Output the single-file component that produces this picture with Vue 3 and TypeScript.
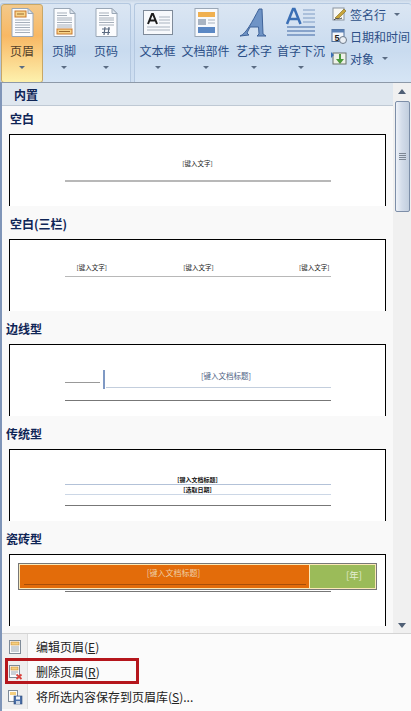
<script setup lang="ts">
interface Btn { label: string; icon: string; width: number; active?: boolean }
const groupOne: Btn[] = [
  { label: '页眉', icon: 'header', width: 42, active: true },
  { label: '页脚', icon: 'footer', width: 42 },
  { label: '页码', icon: 'number', width: 42 },
]
const groupTwo: Btn[] = [
  { label: '文本框', icon: 'textbox', width: 43 },
  { label: '文档部件', icon: 'parts', width: 53 },
  { label: '艺术字', icon: 'art', width: 44 },
  { label: '首字下沉', icon: 'drop', width: 50 },
]
</script>

<template>
  <div class="screen">
    <header class="ribbon">
      <div class="group first">
        <div v-for="b in groupOne" :key="b.label" class="rbtn" :class="{ active: b.active }" :style="{ width: b.width + 'px' }">
          <svg class="ricon" viewBox="0 0 32 32" width="32" height="32">
            <path d="M6 2.500h16l5 5v23H6z" fill="#fbfcfe" stroke="#9aa7b6" />
            <path d="M22 2.500v5h5z" fill="#dfe6ef" stroke="#9aa7b6" />
            <g stroke="#a6afba">
              <path v-if="b.icon !== 'header'" d="M9 7h10M9 9.500h10" />
              <path d="M9 14h15M9 16.500h15M9 19h15" />
              <path v-if="b.icon === 'header'" d="M9 21.500h15M9 24h15M9 26.500h15" />
              <path v-if="b.icon === 'footer'" d="M9 12h15M9 21h15" />
              <path v-if="b.icon === 'number'" d="M9 12h15" />
            </g>
            <template v-if="b.icon === 'header'">
              <rect x="9" y="5" width="11" height="6" fill="#f7d48a" stroke="#c9792a" />
              <path d="M11 8h7" stroke="#9b6a2d" />
            </template>
            <template v-if="b.icon === 'footer'">
              <rect x="9" y="23" width="15" height="5" fill="#f7d48a" stroke="#c9792a" />
              <path d="M11 25.500h11" stroke="#9b6a2d" />
            </template>
            <template v-if="b.icon === 'number'">
              <path d="M12 23h8M12 26.500h8M15 21l-1 8M19 21l-1 8" stroke="#5a6a80" stroke-width="1.200" fill="none" />
            </template>
          </svg>
          <span class="rlabel">{{ b.label }}</span>
          <i class="caret"></i>
        </div>
      </div>
      <div class="group second">
        <div v-for="b in groupTwo" :key="b.label" class="rbtn" :style="{ width: b.width + 'px' }">
          <svg class="ricon" viewBox="0 0 32 32" width="32" height="32">
            <template v-if="b.icon === 'textbox'">
              <rect x="1.500" y="4.500" width="29" height="24" fill="#f7f9fc" stroke="#7f8b9a" />
              <path d="M17 11h11M17 14h11M17 17h11M5 21h23M5 24h23" stroke="#a9b3bf" />
              <path d="M6 18l4-10h1l4 10M7.500 14.500h6" fill="none" stroke="#1c1c1c" stroke-width="2" />
            </template>
            <template v-if="b.icon === 'parts'">
              <rect x="5" y="2.500" width="23" height="28" fill="#f7f9fc" stroke="#9aa7b6" />
              <rect x="8" y="6" width="17" height="5" fill="#f0b050" />
              <rect x="8" y="13" width="8" height="6" fill="#a9b4c2" />
              <path d="M18 14h7M18 17h7" stroke="#a9b3bf" />
              <rect x="8" y="21" width="17" height="6" fill="#5b88c4" />
            </template>
            <template v-if="b.icon === 'art'">
              <path d="M2 30C8 28 14 16 21 3h3l1 25 3 2H19l2-2-.5-7H12l-3 6 2 2z" fill="#6f94c6" stroke="#3f6399" />
            </template>
            <template v-if="b.icon === 'drop'">
              <path d="M2 18L8 3h1.500l6 15M4.500 13h9" fill="none" stroke="#3a6fb5" stroke-width="2.500" />
              <path d="M18 4h12M18 8h12M18 12h12M18 16h12" stroke="#7f9cc4" />
              <path d="M2 21h28M2 25h28M2 29h28" stroke="#6f8fbd" stroke-width="1.300" />
            </template>
          </svg>
          <span class="rlabel">{{ b.label }}</span>
          <i class="caret"></i>
        </div>
        <div class="minis">
          <div class="mini">
            <svg viewBox="0 0 16 16" width="16" height="16"><rect x="2" y="2" width="11" height="12" fill="#f8f8f4" stroke="#8a94a0" /><path d="M4 12L13 3l2 2-8 8z" fill="#c8a43a" stroke="#7a6a20" stroke-width=".6" /><path d="M3 14c3-3 4 0 8-2" stroke="#444" fill="none" /></svg>
            <span>签名行</span><i class="caret inline"></i>
          </div>
          <div class="mini">
            <svg viewBox="0 0 16 16" width="16" height="16"><rect x="1" y="1.500" width="12" height="12" fill="#f4f7fb" stroke="#4f6f9a" /><rect x="1" y="1.500" width="12" height="3" fill="#5a80b5" /><text x="3.500" y="12.500" class="mini-num">5</text><circle cx="12" cy="12" r="3.500" fill="#e9eef4" stroke="#6c7a8a" /></svg>
            <span>日期和时间</span>
          </div>
          <div class="mini">
            <svg viewBox="0 0 16 16" width="16" height="16"><rect x="2" y="3" width="13" height="11" fill="#eef1e8" stroke="#69736b" /><path d="M8 4v5H5l4 5 4-5h-3V4z" fill="#4c9a3c" /><path d="M0 2l3 3-3 3z" fill="#3a6fb5" /></svg>
            <span>对象</span><i class="caret inline"></i>
          </div>
        </div>
      </div>
    </header>

    <section class="panel">
      <div class="gallery-wrap">
        <div class="gallery">
          <h2 class="band">内置</h2>

          <div class="entry first-entry">
            <h3 class="title indented">空白</h3>
            <div class="preview blank">
              <p class="tiny">[键入文字]</p>
              <div class="rule soft"></div>
            </div>
          </div>

          <div class="entry">
            <h3 class="title indented">空白(三栏)</h3>
            <div class="preview columns">
              <div class="three">
                <p class="tiny">[键入文字]</p>
                <p class="tiny">[键入文字]</p>
                <p class="tiny">[键入文字]</p>
              </div>
              <div class="rule soft thin"></div>
            </div>
          </div>

          <div class="entry">
            <h3 class="title">边线型</h3>
            <div class="preview sideline">
              <div class="side-row">
                <div class="side-left"></div>
                <div class="side-bar"></div>
                <div class="side-right"><p class="tiny big">[键入文档标题]</p></div>
              </div>
              <div class="rule dark"></div>
            </div>
          </div>

          <div class="entry">
            <h3 class="title">传统型</h3>
            <div class="preview classic">
              <p class="tiny bold">[键入文档标题]</p>
              <div class="rule blue"></div>
              <p class="tiny bold">[选取日期]</p>
              <div class="rule blue pale"></div>
              <div class="rule dark gap"></div>
            </div>
          </div>

          <div class="entry">
            <h3 class="title">瓷砖型</h3>
            <div class="preview tile">
              <div class="tile-box">
                <div class="tile-main"><span class="tile-text">[键入文档标题]</span><div class="tile-line"></div></div>
                <div class="tile-year"><span class="tile-text year">[年]</span></div>
              </div>
              <div class="rule dark tight"></div>
            </div>
          </div>
        </div>

        <aside class="scrollbar">
          <i class="arrow up"></i>
          <div class="thumb"><b></b><b></b><b></b><b></b></div>
          <div class="track"></div>
          <i class="arrow down"></i>
        </aside>
      </div>

      <nav class="menu">
        <div class="item">
          <span class="gutter">
            <svg viewBox="0 0 16 16" width="16" height="16"><rect x="2.500" y="1.500" width="11" height="13" fill="#fbfcfd" stroke="#7f8b98" /><rect x="4" y="3" width="8" height="3" fill="#f4cf80" stroke="#c9892f" stroke-width=".6" /><path d="M4 8h8M4 10h8M4 12h8" stroke="#9aa6b2" /></svg>
          </span>
          <span class="text">编辑页眉(<u>E</u>)</span>
        </div>
        <div class="item boxed">
          <span class="gutter">
            <svg viewBox="0 0 16 16" width="16" height="16"><rect x="2.500" y="1.500" width="10" height="12" fill="#fbfcfd" stroke="#7f8b98" /><rect x="4" y="3" width="7" height="3" fill="#f4cf80" stroke="#c9892f" stroke-width=".6" /><path d="M4 8h7M4 10h5" stroke="#9aa6b2" /><path d="M9.500 10.500l5 4.500M14.500 10.500l-5 4.500" stroke="#d9403a" stroke-width="1.800" /></svg>
          </span>
          <span class="text">删除页眉(<u>R</u>)</span>
        </div>
        <div class="item">
          <span class="gutter">
            <svg viewBox="0 0 16 16" width="16" height="16"><rect x="1.500" y="1.500" width="9" height="11" fill="#fbfcfd" stroke="#7f8b98" /><rect x="3" y="3" width="6" height="3" fill="#f4cf80" /><rect x="7" y="7" width="8" height="8" fill="#4a6fa8" stroke="#2f4a78" stroke-width=".6" /><rect x="9" y="7.500" width="4" height="3" fill="#eef2f7" /><rect x="9" y="12" width="4" height="3" fill="#c8d4e4" /></svg>
          </span>
          <span class="text">将所选内容保存到页眉库(<u>S</u>)...</span>
        </div>
        <div class="red-box"></div>
      </nav>
    </section>
  </div>
</template>

<style scoped>
.screen {
  width: 411px;
  height: 711px;
  display: flex;
  flex-direction: column;
  overflow: hidden;
  font-family: "Noto Sans CJK SC", "Liberation Sans", sans-serif;
  font-size: 12px;
  background: #d6e3f2;
}
.ribbon {
  height: 82px;
  flex: none;
  display: flex;
  padding-top: 3px;
  box-sizing: border-box;
  background: linear-gradient(#c9d6e6 0, #dbe6f3 4%, #c8daef 55%, #cfdff1 100%);
}
.group {
  display: flex;
  border: 1px solid #b4c8e0;
  border-bottom: 0;
  border-radius: 3px 3px 0 0;
  box-sizing: border-box;
  background: linear-gradient(#dbe6f3, #c9dbef 60%, #d6e5f5);
}
.group.first { width: 131px; margin-left: 0; }
.group.second { flex: 1; margin-left: 3px; padding-left: 1px; border-right: 0; }
.rbtn {
  flex: none;
  display: flex;
  flex-direction: column;
  align-items: center;
  padding-top: 2px;
  box-sizing: border-box;
  color: #2c4f87;
}
.rbtn.active {
  height: 79px;
  border: 1px solid #c8a766;
  border-radius: 3px;
  padding-top: 1px;
  background: linear-gradient(#f3c98a 0, #f8b864 40%, #fbd489 70%, #fdf1ad 100%);
  color: #54402a;
}
.ricon { flex: none; display: block; }
.rlabel {
  margin-top: 5px;
  line-height: 16px;
  white-space: nowrap;
}
.caret {
  display: block;
  width: 0;
  height: 0;
  margin-top: 7px;
  border: 3px solid transparent;
  border-top: 3px solid #5b6c83;
  border-bottom: 0;
}
.caret.inline { margin: 0 0 0 5px; }
.minis {
  flex: 1;
  min-width: 0;
  display: flex;
  flex-direction: column;
  margin-top: -1px;
  margin-left: 5px;
}
.mini {
  height: 22px;
  display: flex;
  align-items: center;
  gap: 3px;
  color: #2c4f87;
  white-space: nowrap;
}
.mini-num { font: 700 9px "Liberation Sans", sans-serif; fill: #222; }

.panel {
  flex: 1;
  min-height: 0;
  display: flex;
  flex-direction: column;
  border-left: 2px solid #7f95b8;
  border-top: 1px solid #8d99a8;
  background: #f9f9f9;
}
.gallery-wrap {
  flex: 1;
  min-height: 0;
  display: flex;
}
.gallery {
  flex: 1;
  min-width: 0;
  overflow: hidden;
}
.band {
  margin: 0;
  height: 22px;
  padding-left: 12px;
  font-size: 12px;
  line-height: 23px;
  font-weight: 700;
  color: #0f2556;
  background: #dfe7ef;
  border-bottom: 1px solid #bfc9d4;
}
.title {
  margin: 0;
  height: 33px;
  padding: 10px 0 0 4px;
  box-sizing: border-box;
  font-size: 12px;
  line-height: 16px;
  font-weight: 700;
  color: #0f2556;
}
.title.indented { padding-left: 8px; }
.first-entry .title { height: 28px; padding-top: 5px; }
.preview {
  margin-left: 7px;
  width: 377px;
  height: 72px;
  box-sizing: border-box;
  border: 1.500px solid #000;
  border-bottom: 0;
  background: #fff;
  display: flex;
  flex-direction: column;
  align-items: center;
  overflow: hidden;
}
.tiny {
  margin: 0;
  font-size: 6.500px;
  line-height: 7px;
  color: #222;
  white-space: nowrap;
}
.tiny.big { font-size: 7.500px; line-height: 9px; color: #4c5e82; }
.tiny.bold { font-weight: 700; color: #111; font-size: 6px; }
.rule { flex: none; width: 266px; height: 1px; }
.rule.soft { height: 1.500px; background: #b8b8b8; margin-top: 13px; }
.rule.soft.thin { margin-top: 5px; height: 1px; }
.rule.dark { background: #777; }
.rule.blue { background: #b3c2d8; margin: 1px 0; }
.rule.blue.pale { background: #ccd7e6; }
.rule.dark.gap { margin-top: 9px; }
.rule.dark.tight { margin-top: 1px; }
.blank { padding-top: 25px; }
.columns { padding-top: 24px; }
.three {
  width: 266px;
  padding: 0 1px 0 12px;
  box-sizing: border-box;
  display: flex;
  justify-content: space-between;
}
.three .tiny:nth-child(2) { margin-right: 9px; }
.sideline { padding-top: 24px; }
.side-row {
  width: 266px;
  height: 20px;
  display: flex;
  align-items: flex-end;
}
.side-left { width: 35px; height: 1px; background: #999; margin-bottom: 6px; }
.side-bar { width: 2px; height: 19px; background: #7f99c4; margin: 0 1px 0 3px; }
.side-right {
  flex: 1;
  height: 17px;
  box-sizing: border-box;
  border-bottom: 1px solid #c3cedd;
  margin-bottom: 1px;
  text-align: center;
  padding-left: 16px;
}
.sideline .rule.dark { margin-top: 11px; }
.classic { padding-top: 26px; }
.tile { padding-top: 8px; }
.tile-box {
  width: 359px;
  height: 27px;
  flex: none;
  box-sizing: border-box;
  display: flex;
  border: 1px solid #777;
  padding: 1px;
  background: #fbe9b8;
}
.tile-main {
  flex: 1;
  background: #e36c0a;
  display: flex;
  flex-direction: column;
  align-items: center;
  padding-top: 3px;
  box-sizing: border-box;
}
.tile-main .tile-text { margin-left: 18px; }
.tile-line { width: 282px; height: 1px; background: #a84e08; margin-top: 6px; }
.tile-year {
  width: 65px;
  margin-left: 1px;
  background: #9bbb59;
  text-align: right;
  padding: 5px 13px 0 0;
  box-sizing: border-box;
}
.tile-text { display: block; font-size: 8px; line-height: 10px; color: #eecfa8; white-space: nowrap; }
.tile-text.year { font-size: 9.500px; color: #e4edd2; }

.scrollbar {
  width: 18px;
  flex: none;
  display: flex;
  flex-direction: column;
  align-items: center;
  background: #f0f0f0;
}
.arrow {
  flex: none;
  width: 0;
  height: 0;
  border: 4px solid transparent;
}
.arrow.up { border-bottom: 5px solid #4f5f75; border-top: 0; margin: 6px 0 7px; }
.arrow.down { border-top: 5px solid #4f5f75; border-bottom: 0; margin: 0 0 5px; }
.thumb {
  flex: none;
  width: 15px;
  height: 111px;
  box-sizing: border-box;
  border: 1px solid #7d8ea8;
  border-radius: 2px;
  background: linear-gradient(90deg, #eef2f8, #d3dcea 45%, #c2cede);
  display: flex;
  flex-direction: column;
  align-items: center;
  justify-content: center;
  gap: 1px;
}
.thumb b { display: block; width: 7px; height: 1px; background: #7d8794; }
.track { flex: 1; }

.menu {
  flex: none;
  position: relative;
  height: 78px;
  box-sizing: border-box;
  border-top: 1px solid #d4d4d4;
  background: #fbfbfb;
}
.item {
  height: 25px;
  display: flex;
  align-items: center;
  color: #222;
  white-space: nowrap;
}
.gutter {
  width: 26px;
  height: 25px;
  flex: none;
  display: flex;
  align-items: center;
  justify-content: center;
  background: #efefef;
  border-right: 1px solid #dcdcdc;
  box-sizing: border-box;
  margin-right: 8px;
}
.red-box {
  position: absolute;
  left: 3px;
  top: 24px;
  width: 134px;
  height: 26px;
  box-sizing: border-box;
  border: 3px solid #b5161c;
}
</style>

<style>
html, body { margin: 0; overflow: hidden; background: #fff; }
</style>
